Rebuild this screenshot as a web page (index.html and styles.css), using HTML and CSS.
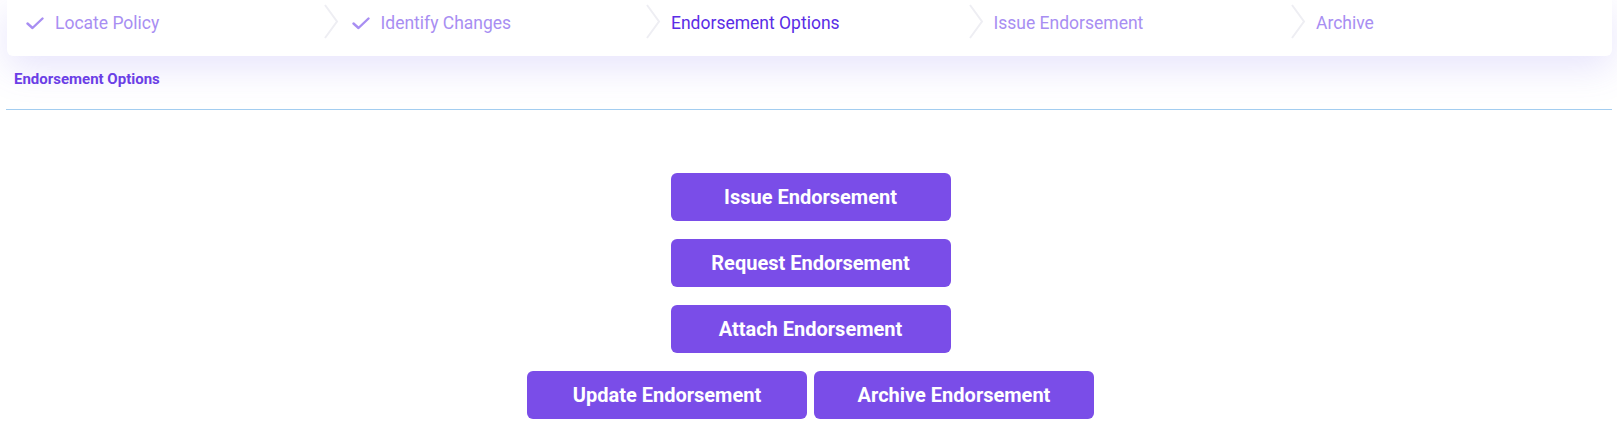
FILE: index.html
```html
<!DOCTYPE html>
<html lang="en">
<head>
<meta charset="utf-8">
<title>Endorsement Options</title>
<link rel="stylesheet" href="styles.css">
</head>
<body>
<div class="page">
  <div class="steps-card">
    <ul class="steps">
      <li class="step done">
        <svg class="check" viewBox="0 0 18 13" width="18" height="13"><polyline points="1.5,6.5 6.5,11 16.5,1.5" fill="none" stroke="currentColor" stroke-width="2.4" stroke-linecap="round" stroke-linejoin="round"/></svg>
        <span>Locate Policy</span>
      </li>
      <li class="step done sep">
        <svg class="check" viewBox="0 0 18 13" width="18" height="13"><polyline points="1.5,6.5 6.5,11 16.5,1.5" fill="none" stroke="currentColor" stroke-width="2.4" stroke-linecap="round" stroke-linejoin="round"/></svg>
        <span>Identify Changes</span>
      </li>
      <li class="step active sep"><span>Endorsement Options</span></li>
      <li class="step sep"><span>Issue Endorsement</span></li>
      <li class="step sep"><span>Archive</span></li>
    </ul>
  </div>
  <div class="section-title">Endorsement Options</div>
  <div class="divider"></div>
  <div class="actions">
    <div class="row"><button class="btn">Issue Endorsement</button></div>
    <div class="row"><button class="btn">Request Endorsement</button></div>
    <div class="row"><button class="btn">Attach Endorsement</button></div>
    <div class="row pair"><button class="btn">Update Endorsement</button><button class="btn">Archive Endorsement</button></div>
  </div>
</div>
</body>
</html>
```

FILE: styles.css
```css
* { box-sizing: border-box; }
html, body { margin: 0; padding: 0; background: #ffffff; }
body { font-family: Roboto, "Liberation Sans", Arial, sans-serif; }

.page {
  padding: 0 5px 0 7px;
}

.steps-card {
  height: 56px;
  background: #ffffff;
  border-radius: 0 0 6px 6px;
  box-shadow: 0 12px 36px rgba(112, 96, 236, 0.17);
  position: relative;
  z-index: 1;
}

.steps {
  list-style: none;
  margin: 0;
  padding: 0 0 0 19px;
  display: flex;
  height: 100%;
}

.step {
  flex: 0 0 322.5px;
  display: flex;
  align-items: center;
  height: 46px;
  font-size: 17.5px;
  color: #a88ef2;
  position: relative;
}

.step:nth-child(2) { padding-left: 3px; }

.step.active { color: #5a2de6; }

.step.sep::before {
  content: "";
  position: absolute;
  left: -28px;
  top: 4px;
  width: 20px;
  height: 35px;
  background: no-repeat center / 20px 35px url("data:image/svg+xml,%3Csvg xmlns='http://www.w3.org/2000/svg' viewBox='0 0 20 35'%3E%3Cpolyline points='4,1 16,17.5 4,34' fill='none' stroke='%23eeeef3' stroke-width='2'/%3E%3C/svg%3E");
}

.check {
  color: #a88ef2;
  margin-right: 11px;
  margin-top: 1px;
}

.section-title {
  font-size: 15px;
  font-weight: 700;
  color: #6b3fe6;
  padding: 14px 0 0 7px;
  height: 53px;
  position: relative;
  z-index: 2;
}

.divider {
  height: 1px;
  background: #a3cdf0;
  margin-left: -1px;
  position: relative;
  z-index: 2;
}

.actions {
  display: flex;
  flex-direction: column;
  align-items: center;
  gap: 18px;
  padding-top: 63px;
  padding-left: 2px;
}

.row {
  display: flex;
  gap: 7px;
}

.btn {
  width: 280px;
  height: 48px;
  border: none;
  border-radius: 6px;
  background: #7a4de8;
  color: #ffffff;
  font-family: Roboto, "Liberation Sans", Arial, sans-serif;
  font-size: 20px;
  font-weight: 700;
  cursor: pointer;
}
```
